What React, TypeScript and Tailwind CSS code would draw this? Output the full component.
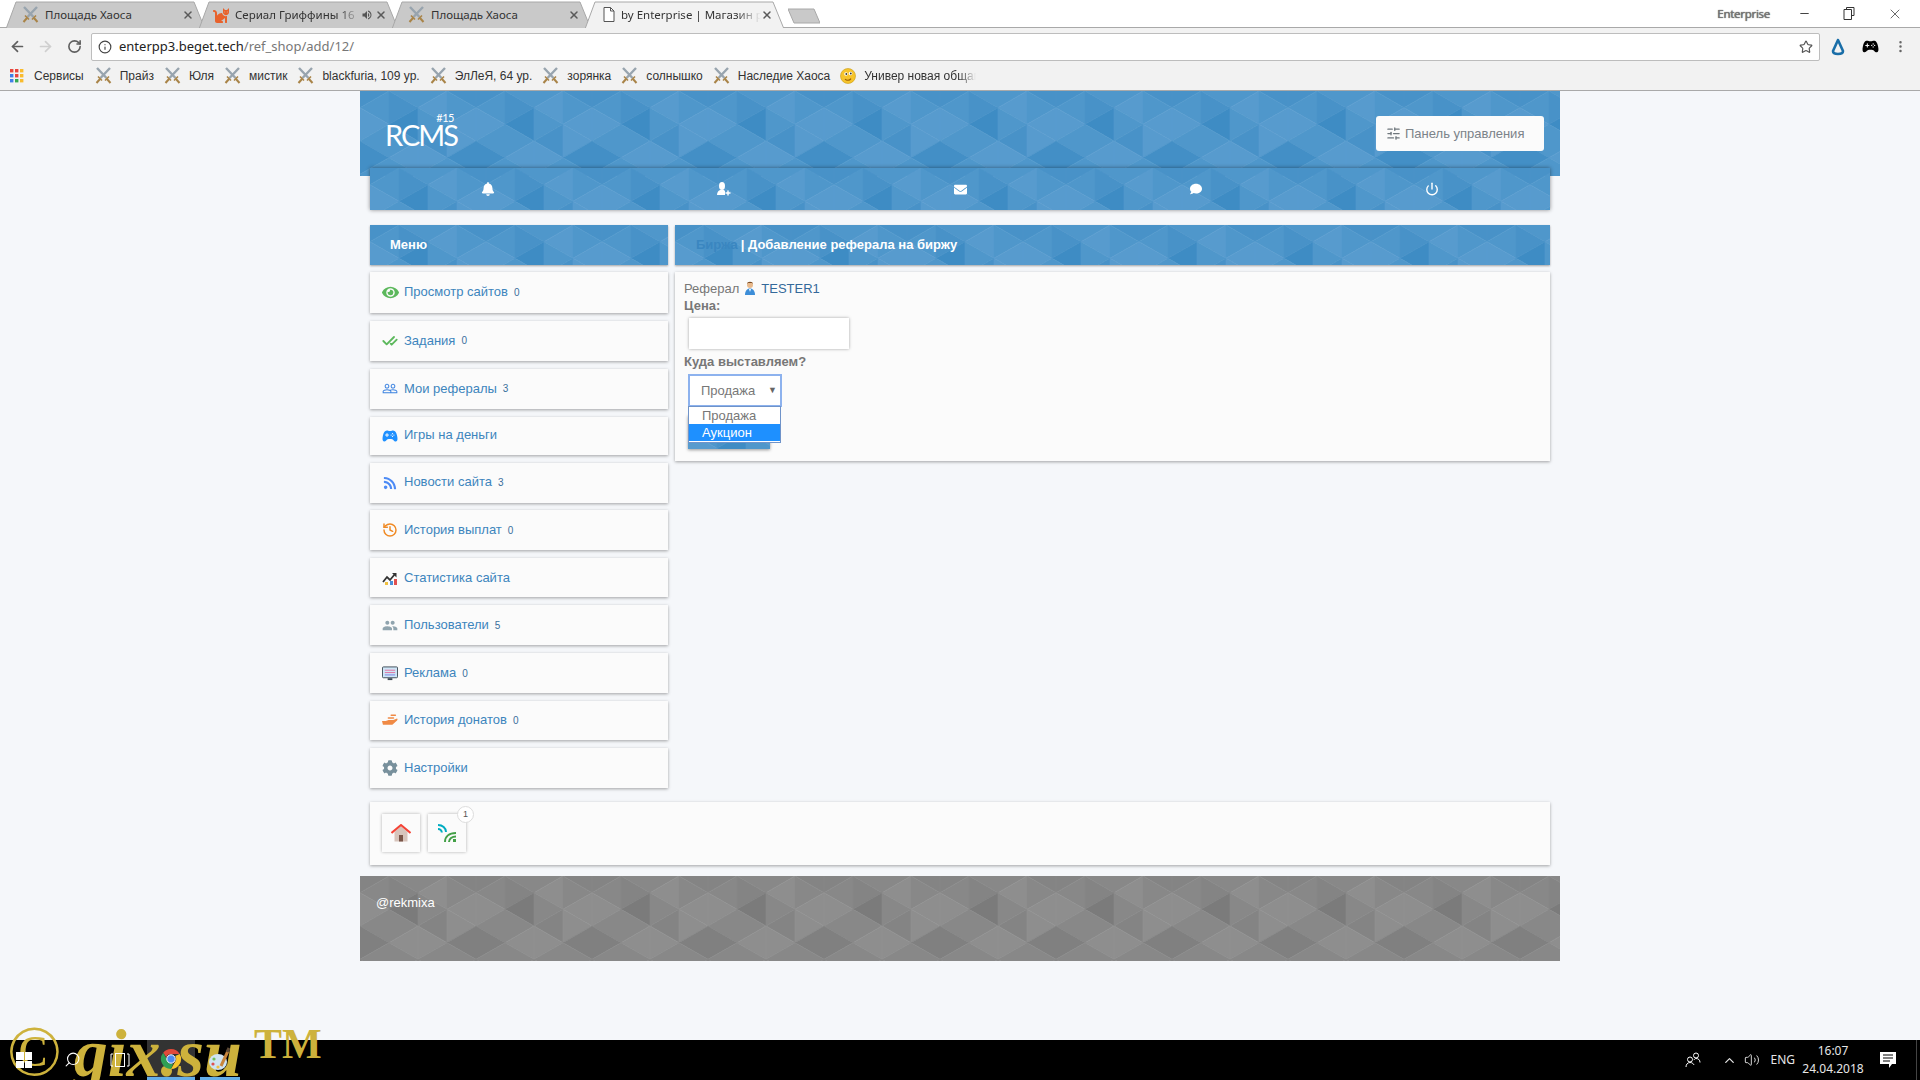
import React from 'react';
import {
  ArrowLeft, ArrowRight, RotateCw, Info, Star, MoreVertical, X, Minus, Volume2, ChevronUp, Power, CheckCheck,
  History, SlidersHorizontal, Search,
} from 'lucide-react';
import { FaBell, FaEnvelope, FaComment, FaEye, FaRss, FaCog, FaCat } from 'react-icons/fa';
import { IoGameController } from 'react-icons/io5';
import { MdPeople, MdPeopleOutline, MdVolumeUp } from 'react-icons/md';

// shade per triangle of the 116x100 tile, strip by strip, top to bottom
const SHADES = [
  [-1, 0, 1, 0, -2, 0],
  [0, -1, -3, 0, 1, 0],
  [0, 1, 0, -1, 1, 0],
  [-1, 0, 1, 1, -2, 0],
];

const PALETTES: Record<string, Record<number, string>> = {
  blue: { 1: '#579bce', 0: '#4f97cb', [-1]: '#4892c8', [-2]: '#438fc6', [-3]: '#3e8cc4' },
  gray: { 1: '#8e8e8e', 0: '#888888', [-1]: '#848484', [-2]: '#808080', [-3]: '#7b7b7b' },
};

const V = 100 / 6;

const tileTriangles = () => {
  const out: { points: string; shade: number }[] = [];
  for (let s = 0; s < 4; s++) {
    const x0 = 29 * s;
    const x1 = x0 + 29;
    const even = s % 2 === 0;
    for (let k = -1; k < 4; k++) {
      const y = k * 2 * V;
      const idx = (k + 3) % 3;
      // triangle with its straight edge on one side, and the one hanging between
      const a = even
        ? `${x1},${y} ${x1},${y + 2 * V} ${x0},${y + V}`
        : `${x0},${y} ${x0},${y + 2 * V} ${x1},${y + V}`;
      const b = even
        ? `${x0},${y - V} ${x0},${y + V} ${x1},${y}`
        : `${x1},${y - V} ${x1},${y + V} ${x0},${y}`;
      out.push({ points: b, shade: SHADES[s][idx * 2] });
      out.push({ points: a, shade: SHADES[s][idx * 2 + 1] });
    }
  }
  return out;
};

const TILE = tileTriangles();

const PolyBg: React.FC<{ tone: 'blue' | 'gray' }> = ({ tone }) => (
  <svg className="absolute inset-0 w-full h-full" aria-hidden="true">
    <defs>
      <pattern id={`tile-${tone}`} width="116" height="100" patternUnits="userSpaceOnUse">
        {TILE.map((t, i) => (
          <polygon key={i} points={t.points} fill={PALETTES[tone][t.shade]} stroke={PALETTES[tone][t.shade]} strokeWidth="0.6" />
        ))}
      </pattern>
    </defs>
    <rect width="100%" height="100%" fill={`url(#tile-${tone})`} />
  </svg>
);

const SwordsIcon = () => (
  <svg width="17" height="17" viewBox="0 0 17 17" className="shrink-0">
    <path d="M2 1l9.500 10M15 1L5.500 11" stroke="#98a4ae" strokeWidth="2.400" />
    <path d="M10 13.500l4-4M3 9.500l4 4" stroke="#a98448" strokeWidth="1.600" />
    <path d="M12 12l3.500 4M5 12l-3.500 4" stroke="#a98448" strokeWidth="2" />
  </svg>
);

const AppsIcon = () => {
  const colors = ['#e8453c', '#e8453c', '#f9bb2d', '#3f7ee8', '#e8453c', '#f9bb2d', '#3f7ee8', '#34a853', '#f9bb2d'];
  return (
    <svg width="14" height="14" viewBox="0 0 14 14" className="shrink-0">
      {colors.map((c, i) => (
        <rect key={i} x={(i % 3) * 5} y={Math.floor(i / 3) * 5} width="3.400" height="3.400" fill={c} />
      ))}
    </svg>
  );
};

const Smiley = () => (
  <svg width="16" height="16" viewBox="0 0 16 16" className="shrink-0">
    <circle cx="8" cy="8" r="7.500" fill="#f6c42c" stroke="#c99a10" strokeWidth="0.600" />
    <circle cx="6" cy="6" r="1.800" fill="#fff" />
    <circle cx="10.500" cy="5.500" r="1.800" fill="#fff" />
    <circle cx="6.300" cy="6" r="0.900" fill="#333" />
    <circle cx="10.800" cy="5.500" r="0.900" fill="#333" />
    <path d="M5 11c1.500 1.800 4.500 1.800 6-.4" stroke="#9a5b00" strokeWidth="1.100" fill="none" />
  </svg>
);

const DocIcon = () => (
  <svg width="12" height="15" viewBox="0 0 12 15" className="shrink-0">
    <path d="M1 .5h6.500L11 4v10.500H1z" fill="#fff" stroke="#555" />
    <path d="M7.500.5V4H11" fill="none" stroke="#555" />
  </svg>
);

const Tab: React.FC<{ active?: boolean; icon: React.ReactNode; title: string; speaker?: boolean; fade?: boolean; pad?: string }> = ({
  active, icon, title, speaker, fade, pad = 'pl-[16px]',
}) => (
  <div className={`relative flex h-[27px] w-[199px] -mr-[6px] items-center pr-[11px] ${pad} ${active ? 'z-10' : ''}`}>
    <svg className="absolute inset-0 w-full h-full" viewBox="0 0 199 27" preserveAspectRatio="none">
      <polygon points="0,28 10,1 188,1 199,28" fill={active ? '#f2f2f2' : '#c9c9c9'} stroke="#a8a8a8" />
    </svg>
    <span className="relative flex shrink-0">{icon}</span>
    <span
      className={`relative ml-[6px] flex-1 overflow-hidden whitespace-nowrap text-[11.500px] text-[#333] ${
        fade ? '[mask-image:linear-gradient(to_right,black_82%,transparent)]' : ''
      }`}
    >
      {title}
    </span>
    {speaker && <MdVolumeUp size={12} className="relative mr-[2px] text-[#555]" />}
    <X size={12} strokeWidth={3} className="relative shrink-0 text-[#5a5a5a]" />
  </div>
);

const BOOKMARKS = ['Прайз', 'Юля', 'мистик', 'blackfuria, 109 ур.', 'ЭлЛеЯ, 64 ур.', 'зорянка', 'солнышко', 'Наследие Хаоса'];

const BrowserChrome = () => (
  <div className="h-[91px] bg-white font-['Noto_Sans',sans-serif] border-b border-[#a9a9a9]">
    <div className="flex h-[28px] items-end border-b border-[#a9a9a9] pl-[6px]">
      <div className="flex translate-y-px">
        <Tab icon={<SwordsIcon />} title="Площадь Хаоса" />
        <Tab icon={<FaCat size={16} className="text-[#e8622c]" />} title="Сериал Гриффины 16" speaker fade pad="pl-[14px]" />
        <Tab icon={<SwordsIcon />} title="Площадь Хаоса" />
        <Tab active icon={<DocIcon />} title="by Enterprise | Магазин реф" fade pad="pl-[18px]" />
        <div className="relative ml-[10px] mb-[4px] h-[16px] w-[32px] self-end">
          <svg viewBox="0 0 32 16" className="w-full h-full">
            <polygon points="0,1 26,1 32,15 6,15" fill="#c9c9c9" stroke="#a8a8a8" />
          </svg>
        </div>
      </div>
      <div className="flex flex-1 self-start items-center justify-end h-[27px] text-[#444]">
        <span className="mr-[28px] text-[11.500px] text-[#777] [text-shadow:0_0_1px_#333] tracking-[-0.300px]">Enterprise</span>
        <Minus size={13} className="mr-[32px]" />
        <svg width="12" height="13" viewBox="0 0 12 13" className="mr-[32px]">
          <path d="M3.500 2.500V.5H11v8H8.500M1 2.500h7.500v10H1z" fill="none" stroke="#333" />
        </svg>
        <X size={16} strokeWidth={1.200} className="mr-[17px]" />
      </div>
    </div>
    <div className="bg-[#f2f2f2] h-[62px]">
      <div className="flex h-[37px] items-center">
        <ArrowLeft size={17} strokeWidth={2.400} className="ml-[9px] text-[#5f5f5f]" />
        <ArrowRight size={17} strokeWidth={2.400} className="ml-[11px] text-[#cfcfcf]" />
        <RotateCw size={15} strokeWidth={2.600} className="ml-[13px] text-[#5f5f5f]" />
        <div className="ml-[9px] flex h-[28px] w-[1729px] items-center rounded-[2px] border border-[#bdbdbd] bg-white pl-[6px] text-[13px]">
          <Info size={14} className="text-[#444]" />
          <span className="ml-[7px] text-[#222]">enterpp3.beget.tech</span>
          <span className="text-[#777]">/ref_shop/add/12/</span>
          <Star size={14} className="ml-auto mr-[6px] text-[#555]" />
        </div>
        <svg width="16" height="18" viewBox="0 0 16 18" className="ml-[10px]">
          <path d="M8 2L3 13c0 2 2 3 5 3s5-1 5-3z" fill="none" stroke="#1a6ea8" strokeWidth="2.600" strokeLinejoin="round" />
        </svg>
        <IoGameController size={17} className="ml-[16px] text-black" />
        <MoreVertical size={15} className="ml-[14px] text-[#666]" />
      </div>
      <div className="flex h-[21px] items-center pl-[10px] font-['Liberation_Sans',sans-serif] text-[12px] text-[#333]">
        <AppsIcon />
        <span className="ml-[10px] mr-[11px]">Сервисы</span>
        {BOOKMARKS.map(b => (
          <div key={b} className="flex items-center">
            <SwordsIcon />
            <span className="ml-[8px] mr-[10px] whitespace-nowrap">{b}</span>
          </div>
        ))}
        <Smiley />
        <span className="ml-[8px] whitespace-nowrap [mask-image:linear-gradient(to_right,black_85%,transparent)] w-[112px] overflow-hidden">
          Универ новая общага
        </span>
      </div>
    </div>
  </div>
);

const Eye = () => (
  <span className="flex h-[15px] w-[17px] items-center justify-center">
    <FaEye size={17} className="text-[#5cb85c]" />
  </span>
);

const ChartIcon = () => (
  <svg width="16" height="14" viewBox="0 0 16 14">
    <path d="M1 11l4-5 3 3 5-6" fill="none" stroke="#333" strokeWidth="1.800" />
    <path d="M10 2h4.500v4.500z" fill="#333" />
    <rect x="3" y="11" width="3" height="3" fill="#f0c040" />
    <rect x="8" y="10" width="3" height="4" fill="#4a90d9" />
    <rect x="12" y="8" width="3" height="6" fill="#e05050" />
  </svg>
);

const MonitorIcon = () => (
  <svg width="17" height="15" viewBox="0 0 17 15">
    <rect x="0.500" y="0.500" width="16" height="11.500" rx="1" fill="#cfe6f7" stroke="#3d4a55" />
    <path d="M3 4h11M3 6.500h11" stroke="#e06fa0" strokeWidth="1" />
    <path d="M3 9h11" stroke="#7a7fe0" strokeWidth="1" />
    <rect x="6" y="12.500" width="5" height="2" fill="#3d4a55" />
  </svg>
);

const HandIcon = () => (
  <svg width="17" height="13" viewBox="0 0 17 13">
    <path d="M0 7h4l3-1h5l4-1.500c.8.500.5 1.500 0 2L11 11H1z" fill="#f08a45" />
    <rect x="6" y="3" width="7" height="1.600" rx="0.800" fill="#f08a45" />
    <rect x="9" y="0" width="6" height="1.600" rx="0.800" fill="#f08a45" />
  </svg>
);

const MENU = [
  { label: 'Просмотр сайтов', count: '0', icon: <Eye />, h: 'h-[41px]' },
  { label: 'Задания', count: '0', icon: <CheckCheck size={18} strokeWidth={2.800} className="text-[#5cb85c]" />, h: 'h-[40px]' },
  { label: 'Мои рефералы', count: '3', icon: <MdPeopleOutline size={19} className="text-[#3b82e0]" />, h: 'h-[40px]' },
  { label: 'Игры на деньги', count: '', icon: <IoGameController size={16} className="text-[#1e90ff]" />, h: 'h-[38px]' },
  { label: 'Новости сайта', count: '3', icon: <FaRss size={14} className="text-[#4d8bf5]" />, h: 'h-[40px]' },
  { label: 'История выплат', count: '0', icon: <History size={16} strokeWidth={2.200} className="text-[#f08a24]" />, h: 'h-[40px]' },
  { label: 'Статистика сайта', count: '', icon: <ChartIcon />, h: 'h-[39px]' },
  { label: 'Пользователи', count: '5', icon: <MdPeople size={19} className="text-[#90a4ae]" />, h: 'h-[40px]' },
  { label: 'Реклама', count: '0', icon: <MonitorIcon />, h: 'h-[40px]' },
  { label: 'История донатов', count: '0', icon: <HandIcon />, h: 'h-[39px]' },
  { label: 'Настройки', count: '', icon: <FaCog size={16} className="text-[#78909c]" />, h: 'h-[40px]' },
];

const panel = 'bg-[#fbfbfb] shadow-[0_1px_3px_rgba(0,0,0,0.35)]';

const Sidebar = () => (
  <div className="flex w-[298px] shrink-0 flex-col gap-[7.900px]">
    {MENU.map(m => (
      <div key={m.label} className={`flex items-center pl-[12px] text-[13px] text-[#3d85bd] ${panel} ${m.h}`}>
        <span className="flex w-[16px] shrink-0 justify-center">{m.icon}</span>
        <span className="ml-[6px] -mt-[1px]">{m.label}</span>
        {m.count && <span className="ml-[6px] text-[10px] text-[#3a6f9c]">{m.count}</span>}
      </div>
    ))}
  </div>
);

const Avatar = () => (
  <svg width="12" height="15" viewBox="0 0 12 15">
    <circle cx="6" cy="4" r="3" fill="#e8b98c" />
    <path d="M3 3c0-3 6-3 6 0l-1-1H4z" fill="#7a4a20" />
    <path d="M1 14c0-4 2-6.500 5-6.500s5 2.500 5 6.500z" fill="#3d8ed8" />
    <path d="M5 8h2l-1 3z" fill="#fff" />
  </svg>
);

const MainPanel = () => (
  <div className={`px-[9px] pt-[8px] pb-[12px] text-[13px] text-[#777] ${panel}`}>
    <div className="flex h-[17px] items-center">
      <span>Реферал</span>
      <span className="ml-[5px] mr-[5px]">
        <Avatar />
      </span>
      <span className="text-[#34699a]">TESTER1</span>
    </div>
    <div className="h-[17px] font-bold leading-[17px]">Цена:</div>
    <div className="mt-[4px] ml-[5px] h-[31px] w-[160px] bg-white shadow-[0_0_3px_rgba(0,0,0,0.35)]" />
    <div className="mt-[3px] h-[20px] font-bold leading-[20px]">Куда выставляем?</div>
    <div className="relative mt-[2px] ml-[4px] w-[94px]">
      <div className="flex h-[33px] items-center justify-between border-2 border-[#8db2ee] bg-white pl-[11px] pr-[3px]">
        <span>Продажа</span>
        <span className="text-[9px] text-[#666]">▼</span>
      </div>
      <div className="absolute left-0 top-[32px] z-10 w-[93px] border border-[#6f93c9] bg-white pb-[1px] text-[13px]">
        <div className="h-[17px] pl-[13px] leading-[17px]">Продажа</div>
        <div className="h-[17px] bg-[#1e90ff] pl-[13px] leading-[17px] text-white">Аукцион</div>
      </div>
      <div className="relative mt-[8px] h-[34px] w-[82px] overflow-hidden shadow-[0_1px_3px_rgba(0,0,0,0.4)]">
        <PolyBg tone="blue" />
      </div>
    </div>
  </div>
);

const HomeIcon = () => (
  <svg width="20" height="18" viewBox="0 0 20 18">
    <path d="M3.500 8v9.500h13V8L10 2z" fill="#d7c4bb" />
    <rect x="8" y="11" width="4" height="6.500" fill="#795548" />
    <path d="M0.500 9L10 1l9.500 8" fill="none" stroke="#f44336" strokeWidth="2" />
  </svg>
);

const SignalIcon = () => (
  <svg width="19" height="19" viewBox="0 0 19 19" fill="none">
    <path d="M0 1c4.500 0 8 3 8 7" stroke="#00acc1" strokeWidth="2" />
    <path d="M0 5c2 0 3.800 1.500 3.800 3.500" stroke="#00acc1" strokeWidth="2" />
    <path d="M7 18c0-5.500 4-9 11-9" stroke="#43a047" strokeWidth="2" />
    <path d="M11 18c0-3.200 3-5.500 7-5.500" stroke="#43a047" strokeWidth="2" />
    <rect x="15" y="15" width="3" height="3" fill="#43a047" />
  </svg>
);

const UserPlusIcon = () => (
  <svg width="14" height="14" viewBox="0 0 14 14" fill="#fff">
    <ellipse cx="5" cy="4" rx="3" ry="4" />
    <path d="M0 13c0-3 1.800-4.500 3.200-5h3.600c.6.300 1 .7 1.200 1.200V13z" />
    <path d="M11 8.500v5M8.500 11h5" stroke="#fff" strokeWidth="1.400" />
  </svg>
);

const Site = () => (
  <div className="mx-auto flex w-[1200px] flex-col font-['Liberation_Sans',Arial,sans-serif]">
    <div className="relative h-[85px]">
      <PolyBg tone="blue" />
      <div className="relative flex h-[85px] items-start justify-between pl-[25px] pr-[16px]">
        <div className="relative mt-[24px] font-['Lato',sans-serif] text-[29px] leading-[40px] tracking-[-2px] text-white">
          RCMS
          <span className="absolute right-[3px] -top-[3px] text-[11px] leading-[11px] tracking-[-0.500px]">#15</span>
        </div>
        <div className="mt-[25px] flex h-[35px] w-[168px] items-center rounded-[3px] bg-[#fbfbfb] pl-[10px] text-[13px] text-[#7b8389]">
          <SlidersHorizontal size={15} className="mr-[4px] text-[#6f777d]" />
          Панель управления
        </div>
      </div>
    </div>

    <div className="relative mx-[10px] -mt-[8px] h-[42px] overflow-hidden shadow-[0_0_4px_rgba(0,0,0,0.45)]">
      <PolyBg tone="blue" />
      <div className="relative grid h-full grid-cols-5 items-center justify-items-center text-white">
        <FaBell size={14} />
        <UserPlusIcon />
        <FaEnvelope size={13} />
        <FaComment size={12} />
        <Power size={14} strokeWidth={2.400} />
      </div>
    </div>

    <div className="mx-[10px] mt-[15px] flex gap-[7px]">
      <div className="flex w-[298px] shrink-0 flex-col gap-[7px]">
        <div className="relative h-[40px] overflow-hidden shadow-[0_1px_2px_rgba(0,0,0,0.35)]">
          <PolyBg tone="blue" />
          <div className="relative flex h-full items-center pl-[20px] text-[13px] font-bold text-white">Меню</div>
        </div>
        <Sidebar />
      </div>
      <div className="flex flex-1 flex-col gap-[7px]">
        <div className="relative h-[40px] overflow-hidden shadow-[0_1px_2px_rgba(0,0,0,0.35)]">
          <PolyBg tone="blue" />
          <div className="relative flex h-full items-center pl-[21px] text-[13px] font-bold text-white">
            <span className="text-[#3a86c0]">Биржа</span>
            <span className="ml-[3px]">| Добавление реферала на биржу</span>
          </div>
        </div>
        <MainPanel />
      </div>
    </div>

    <div className={`mx-[10px] mt-[14px] flex h-[63px] items-center gap-[8px] pl-[12px] ${panel}`}>
      <div className="flex h-[38px] w-[38px] items-center justify-center bg-[#fbfbfb] shadow-[0_0_3px_rgba(0,0,0,0.3)]">
        <HomeIcon />
      </div>
      <div className="relative flex h-[38px] w-[38px] items-center justify-center bg-[#fbfbfb] shadow-[0_0_3px_rgba(0,0,0,0.3)]">
        <SignalIcon />
        <span className="absolute -right-[8px] -top-[8px] flex h-[17px] w-[17px] items-center justify-center rounded-full border border-[#ddd] bg-white text-[9px] text-[#555]">
          1
        </span>
      </div>
    </div>

    <div className="relative mt-[11px] h-[85px]">
      <PolyBg tone="gray" />
      <div className="relative pl-[16px] pt-[17px] text-[13px] text-white">@rekmixa</div>
    </div>
  </div>
);

const ChromeIcon = () => (
  <svg width="22" height="22" viewBox="0 0 22 22" className="relative z-[2]">
    <path d="M11 1a10 10 0 0 1 8.700 5H11a5 5 0 0 0-4.700 3.300L3.200 4.700A10 10 0 0 1 11 1z" fill="#e04a3a" />
    <path d="M19.700 6A10 10 0 0 1 11 21l4.300-7.500A5 5 0 0 0 15.300 8z" fill="#f7c52c" />
    <path d="M11 21A10 10 0 0 1 3.200 4.700l4.300 7.500A5 5 0 0 0 13 16z" fill="#2f9e55" />
    <circle cx="11" cy="11" r="4.200" fill="#4d8bf0" stroke="#fff" strokeWidth="1" />
  </svg>
);

const PaintIcon = () => (
  <svg width="24" height="24" viewBox="0 0 24 24" className="relative z-[2]">
    <ellipse cx="10" cy="15" rx="9" ry="8" fill="#cfe4f2" />
    <circle cx="6" cy="12" r="1.600" fill="#6ec05a" />
    <circle cx="5" cy="17" r="1.600" fill="#e05050" />
    <circle cx="10" cy="20" r="1.600" fill="#f0c040" />
    <path d="M13 19L20 4" stroke="#c8853c" strokeWidth="3" />
    <path d="M19 5l2-4" stroke="#5d4a36" strokeWidth="3" />
  </svg>
);

const PeopleTray = () => (
  <svg width="16" height="16" viewBox="0 0 16 16" fill="none" stroke="#fff" className="mr-[21px]">
    <circle cx="5" cy="7.500" r="2.500" />
    <path d="M1 15c0-2.500 1.500-4.500 4-4.500s3.500 1.500 4 2.500" />
    <circle cx="11" cy="3.500" r="2.500" />
    <path d="M9 8c.5-1 1-1.500 2-1.500 2.500 0 4 1.500 4 4" />
  </svg>
);

const Taskbar = () => (
  <div className="relative flex h-[40px] items-stretch bg-black font-['Noto_Sans',sans-serif] text-[#e6e6e6]">
    <div className="absolute -top-[14px] left-[7px] z-[1] flex h-[54px] items-start overflow-hidden font-['Liberation_Serif',serif] text-[#cdb23c]">
      <span className="-mt-[6px] text-[72px] leading-[62px]">©</span>
      <span className="ml-[12px] -mt-[13px] text-[68px] font-bold italic leading-[80px]">gix.su</span>
      <span className="ml-[12px] text-[42px] font-bold leading-[36px]">TM</span>
    </div>
    <div className="relative z-[2] ml-[16px] mt-[12px] grid h-[16px] w-[16px] grid-cols-2 gap-[1px]">
      <span className="bg-white" />
      <span className="bg-white" />
      <span className="bg-white" />
      <span className="bg-white" />
    </div>
    <Search size={17} strokeWidth={1.500} className="relative z-[2] ml-[32px] mt-[11px] -scale-x-100 text-white" />
    <svg width="20" height="14" viewBox="0 0 20 14" className="relative z-[2] ml-[29px] mt-[13px]">
      <path d="M3 1H1v12h2M17 1h2v12h-2" fill="none" stroke="#fff" />
      <rect x="5.500" y="0.500" width="9" height="13" fill="none" stroke="#fff" />
    </svg>
    <div className="ml-[17px] flex w-[48px] items-center justify-center border-b-[3px] border-[#64aee8] bg-[#333]">
      <ChromeIcon />
    </div>
    <div className="ml-[5px] flex w-[40px] items-center justify-center border-b-[3px] border-[#64aee8]">
      <PaintIcon />
    </div>
    <div className="ml-auto flex items-center text-[12px]">
      <PeopleTray />
      <ChevronUp size={15} className="mr-[7px]" />
      <Volume2 size={16} strokeWidth={1.400} className="mr-[10px]" />
      <span className="mr-[10px]">ENG</span>
      <div className="flex w-[56px] flex-col items-center leading-[18px]">
        <span>16:07</span>
        <span>24.04.2018</span>
      </div>
      <svg width="16" height="16" viewBox="0 0 16 16" className="ml-[19px] mr-[20px]">
        <path d="M0 0h16v12h-4l-3 4v-4H0z" fill="#fff" />
        <path d="M3 3h10M3 6h10M3 9h7" stroke="#000" />
      </svg>
      <span className="mr-[3px] h-full w-px bg-[#444]" />
    </div>
  </div>
);

const App: React.FC = () => (
  <div className="flex h-[1080px] flex-col overflow-hidden bg-[#f5f7fa]">
    <BrowserChrome />
    <div className="flex-1">
      <Site />
    </div>
    <Taskbar />
  </div>
);

export default App;
